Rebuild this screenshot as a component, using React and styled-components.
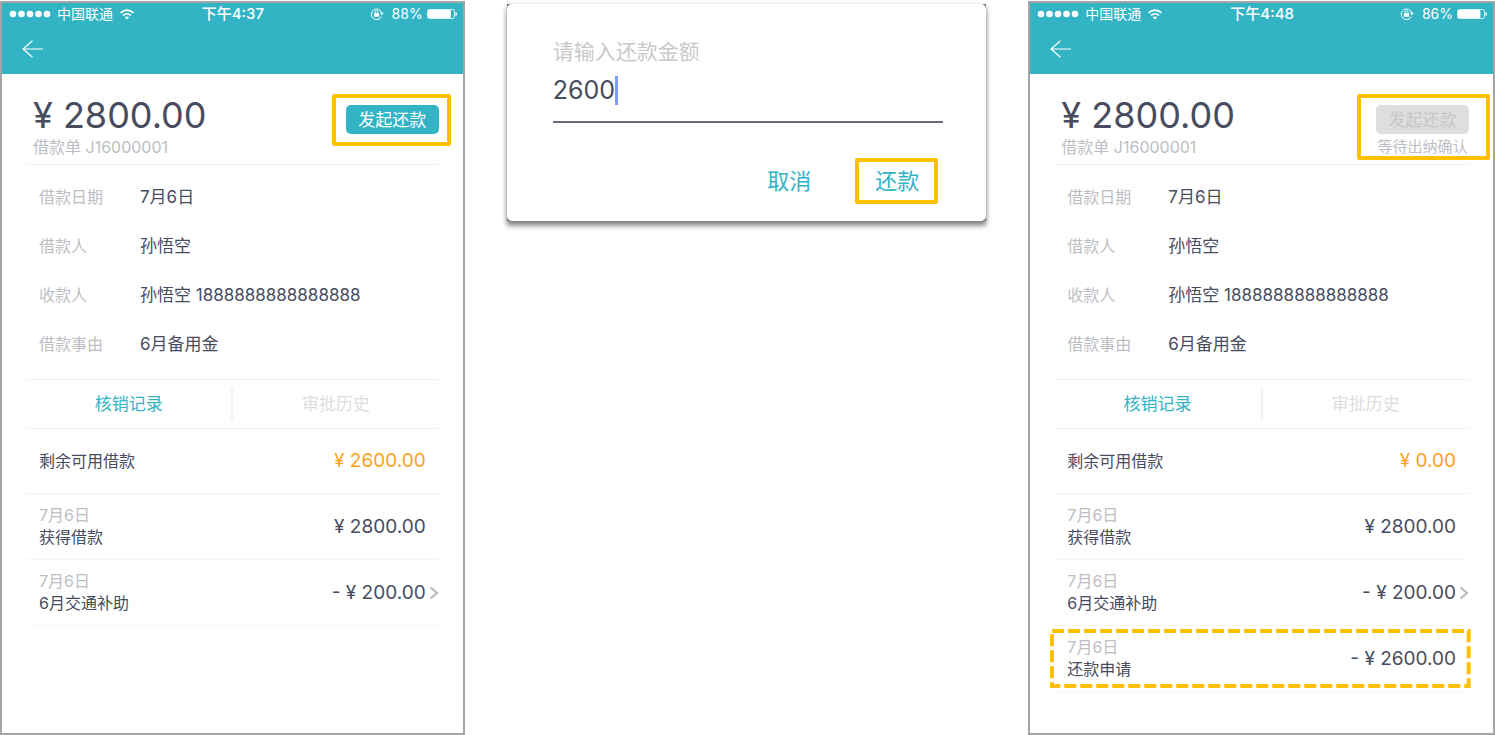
import React, { useState } from "react";
import styled, { createGlobalStyle, css } from "styled-components";

const color = {
  teal: "#32b4c5",
  ink: "#474c5e",
  muted: "#bcbec4",
  faint: "#dcdddf",
  line: "#f1f1f2",
  orange: "#ff9f1c",
  mark: "#ffc000",
  frame: "#a5a5a5",
};

const GlobalStyle = createGlobalStyle`
  *, *::before, *::after { box-sizing: border-box; }
  body {
    margin: 0;
    background: #fff;
    color: ${color.ink};
    font-family: Inter, "Noto Sans CJK SC", sans-serif;
    font-size: 16px;
    line-height: 22px;
  }
  button, input { font: inherit; color: inherit; }
  button { border: 0; padding: 0; background: none; cursor: pointer; }
`;

const Page = styled.main`
  display: grid;
  grid-template-columns: 465fr 480fr 467fr;
  column-gap: 42px;
  align-items: start;
  min-height: 100vh;
  padding-top: 1px;
`;

const Phone = styled.section`
  display: flex;
  flex-direction: column;
  min-height: calc(100vh - 1px);
  border: 2px solid ${color.frame};
`;

const TopBar = styled.header`
  background: ${color.teal};
  color: #fff;
  height: 71px;
`;

const StatusBar = styled.div`
  display: grid;
  grid-template-columns: 1fr auto 1fr;
  align-items: center;
  height: 22px;
  padding: 0 6px 0 7px;
  font-size: 14px;
`;

const StatusGroup = styled.div`
  display: flex;
  align-items: center;
  gap: ${(p) => p.$gap}px;
  justify-content: ${(p) => (p.$end ? "flex-end" : "flex-start")};
`;

const Time = styled.span`
  font-size: 15px;
  font-weight: 500;
`;

const BackButton = styled.button`
  display: flex;
  align-items: center;
  height: 48px;
  padding: 0 20px;
  color: #fff;
`;

const Body = styled.div`
  padding: 0 24px;
`;

const Summary = styled.div`
  display: flex;
  justify-content: space-between;
  align-items: flex-start;
  height: 91px;
  padding: 20px 0 0 7px;
  border-bottom: 1px solid ${color.line};
`;

const Total = styled.h1`
  margin: 0;
  font-size: 36px;
  line-height: 42px;
  font-weight: 400;
`;

const OrderNo = styled.p`
  margin: 0;
  color: ${color.muted};
`;

const Action = styled.div`
  position: relative;
  margin-top: 11px;
  text-align: center;
`;

const RepayButton = styled.button`
  display: block;
  width: 93px;
  height: 29px;
  border-radius: 5px;
  background: ${color.teal};
  color: #fff;
  font-size: 17px;
  line-height: 28px;
  &:disabled {
    background: #dedede;
    color: #c6c6c6;
    cursor: default;
  }
`;

const Note = styled.p`
  margin: 2px 0 0;
  color: ${color.muted};
  font-size: 15px;
`;

const Highlight = styled.span`
  position: absolute;
  inset: ${(p) => p.$inset};
  border: 4px solid ${color.mark};
  border-radius: 2px;
  pointer-events: none;
`;

const DashedMark = styled.svg`
  position: absolute;
  top: 3px;
  left: -4px;
  width: calc(100% + 6px);
  height: calc(100% - 6px);
  pointer-events: none;
  rect {
    width: calc(100% - 4px);
    height: calc(100% - 4px);
    fill: none;
    stroke: ${color.mark};
    stroke-width: 4px;
    stroke-dasharray: 12 4;
  }
`;

const Details = styled.dl`
  margin: 0;
  padding: 7px 0 11px 13px;
`;

const Detail = styled.div`
  display: flex;
  align-items: center;
  height: 49px;
  dt {
    width: 101px;
    color: ${color.muted};
  }
  dd {
    margin: 0;
    font-size: 17px;
  }
`;

const Tabs = styled.div`
  display: flex;
  align-items: center;
  height: 50px;
  border: solid ${color.line};
  border-width: 1px 0;
`;

const Tab = styled.button`
  flex: 1;
  height: 32px;
  font-size: 17px;
  color: ${(p) => (p.$active ? color.teal : color.faint)};
  & + & {
    border-left: 2px solid ${color.line};
  }
`;

const Records = styled.ul`
  margin: 0;
  padding: 0;
  list-style: none;
`;

const rowLayout = css`
  display: flex;
  justify-content: space-between;
  align-items: center;
  padding: 0 13px;
`;

const Remaining = styled.div`
  ${rowLayout}
  height: 65px;
  border-bottom: 1px solid ${color.line};
`;

const Record = styled.li`
  ${rowLayout}
  position: relative;
  height: 66px;
  border-bottom: 1px solid #f7f7f7;
`;

const RecordText = styled.div`
  padding-bottom: 2px;
  p { margin: 0; }
`;

const RecordDate = styled.p`
  color: ${color.muted};
`;

const Amount = styled.span`
  font-size: 19px;
  color: ${(p) => (p.$accent ? color.orange : color.ink)};
`;

const More = styled.a`
  position: absolute;
  right: 0;
  display: flex;
  color: #b9bbc2;
`;

const DialogArea = styled.div`
  padding-top: 3px;
`;

const DialogShadow = styled.div`
  background: #777;
  box-shadow: 0 5px 5px rgba(0, 0, 0, 0.42), 0 1px 5px rgba(0, 0, 0, 0.2);
`;

const Dialog = styled.form`
  padding: 34px 43px 13px 46px;
  border-radius: 5px;
  background: #fff;
`;

const FieldLabel = styled.label`
  display: block;
  color: #c9c9c9;
  font-size: 21px;
  line-height: 28px;
`;

const Field = styled.div`
  display: flex;
  align-items: center;
  height: 57px;
  padding-bottom: 7px;
  border-bottom: 2px solid #666a79;
`;

const AmountInput = styled.input`
  field-sizing: content;
  min-width: 24px;
  height: 32px;
  padding: 0;
  border: 0;
  outline: 0;
  background: none;
  font-size: 25px;
  caret-color: transparent;
`;

const Caret = styled.span`
  width: 3px;
  height: 29px;
  background: #7f9dff;
`;

const Buttons = styled.div`
  display: flex;
  justify-content: flex-end;
  gap: 64px;
  padding: 40px 24px 0 0;
  height: 85px;
`;

const TextButton = styled.button`
  position: relative;
  height: 36px;
  color: ${color.teal};
  font-size: 22px;
`;

const SignalDots = () => (
  <svg width="42" height="8" viewBox="0 0 42 8" fill="currentColor" aria-hidden="true">
    {[4, 12.500, 21, 29.500, 38].map((x) => (
      <circle key={x} cx={x} cy="4" r="3.3" />
    ))}
  </svg>
);

const WifiIcon = () => (
  <svg width="16" height="11" viewBox="0 0 16 12" fill="none" stroke="currentColor" strokeWidth="1.8" aria-hidden="true">
    <path d="M.9 4.3C5 .3 11 .3 15.100 4.300" />
    <path d="M3.600 7.100c2.600-2.500 6.200-2.500 8.800 0" />
    <path d="M8 11.500 5.600 9.100c1.500-1.300 3.300-1.300 4.800 0z" fill="currentColor" stroke="none" />
  </svg>
);

const LockIcon = () => (
  <svg width="14" height="12" viewBox="0 0 14 12" fill="none" stroke="currentColor" aria-hidden="true">
    <path d="M11.400 8.500A5.300 5.300 0 1 1 11.700 5" />
    <path d="M9.900 4.800h4L11.900 7.200z" fill="currentColor" stroke="none" />
    <rect x="3.900" y="5.200" width="5.200" height="3.600" fill="currentColor" stroke="none" />
    <path d="M5 5.500V4.300a1.500 1.500 0 0 1 3 0v1.200" />
  </svg>
);

const Battery = ({ level }) => (
  <svg width="30" height="11" viewBox="0 0 30 11" fill="none" aria-hidden="true">
    <rect x=".5" y=".5" width="27" height="9" rx="2" stroke="#fff" strokeOpacity=".8" />
    <rect x="1" y="1" width={(26 * level) / 100} height="8" rx="1" fill="#fff" />
    <path d="M28.500 3c2 .5 2 3.500 0 4z" fill="#fff" />
  </svg>
);

const ArrowIcon = () => (
  <svg width="21" height="18" viewBox="0 0 21 18" fill="none" stroke="currentColor" strokeWidth="1.200" aria-hidden="true">
    <path d="M10.500 .8 1 9l9.500 8.200M1 9h20" />
  </svg>
);

const ChevronIcon = () => (
  <svg width="10" height="14" viewBox="0 0 10 14" fill="none" stroke="currentColor" strokeWidth="2.200" aria-hidden="true">
    <path d="M1.500 1.500 8 7l-6.500 5.500" />
  </svg>
);

const details = [
  ["借款日期", "7月6日"],
  ["借款人", "孙悟空"],
  ["收款人", "孙悟空 1888888888888888"],
  ["借款事由", "6月备用金"],
];

const loanRecords = [
  { date: "7月6日", title: "获得借款", amount: "¥ 2800.00" },
  { date: "7月6日", title: "6月交通补助", amount: "- ¥ 200.00", link: true },
];

const tabNames = ["核销记录", "审批历史"];

function LoanScreen({ time, battery, remaining, records, pending }) {
  const [tab, setTab] = useState(0);
  return (
    <Phone>
      <TopBar>
        <StatusBar>
          <StatusGroup $gap={6}>
            <SignalDots />
            <span>中国联通</span>
            <WifiIcon />
          </StatusGroup>
          <Time>{time}</Time>
          <StatusGroup $gap={4} $end>
            <LockIcon />
            <span>&nbsp;{battery}%</span>
            <Battery level={battery} />
          </StatusGroup>
        </StatusBar>
        <BackButton type="button" aria-label="返回">
          <ArrowIcon />
        </BackButton>
      </TopBar>
      <Body>
        <Summary>
          <div>
            <Total>¥ 2800.00</Total>
            <OrderNo>借款单 J16000001</OrderNo>
          </div>
          <Action>
            <RepayButton type="button" disabled={pending}>发起还款</RepayButton>
            {pending && <Note>等待出纳确认</Note>}
            <Highlight $inset={pending ? "-11px -21px -2px -19px" : "-11px -12px -12px -14px"} />
          </Action>
        </Summary>
        <Details>
          {details.map(([name, value]) => (
            <Detail key={name}>
              <dt>{name}</dt>
              <dd>{value}</dd>
            </Detail>
          ))}
        </Details>
        <Tabs role="tablist">
          {tabNames.map((name, i) => (
            <Tab key={name} type="button" role="tab" aria-selected={tab === i} $active={tab === i} onClick={() => setTab(i)}>
              {name}
            </Tab>
          ))}
        </Tabs>
        <Remaining>
          <span>剩余可用借款</span>
          <Amount $accent>{remaining}</Amount>
        </Remaining>
        <Records>
          {records.map((r) => (
            <Record key={r.title}>
              <RecordText>
                <RecordDate>{r.date}</RecordDate>
                <p>{r.title}</p>
              </RecordText>
              <Amount>{r.amount}</Amount>
              {r.link && (
                <More href="#detail" aria-label={r.title}>
                  <ChevronIcon />
                </More>
              )}
              {r.marked && (
                <DashedMark aria-hidden="true">
                  <rect x="2" y="2" />
                </DashedMark>
              )}
            </Record>
          ))}
        </Records>
      </Body>
    </Phone>
  );
}

function RepayDialog() {
  const [value, setValue] = useState("2600");
  return (
    <DialogArea>
      <DialogShadow>
        <Dialog onSubmit={(e) => e.preventDefault()}>
          <FieldLabel htmlFor="repay-amount">请输入还款金额</FieldLabel>
          <Field>
            <AmountInput id="repay-amount" inputMode="decimal" value={value} onChange={(e) => setValue(e.target.value)} />
            <Caret />
          </Field>
          <Buttons>
            <TextButton type="button">取消</TextButton>
            <TextButton type="submit">
              还款
              <Highlight $inset="-5px -19px -5px -20px" />
            </TextButton>
          </Buttons>
        </Dialog>
      </DialogShadow>
    </DialogArea>
  );
}

export default function App() {
  return (
    <>
      <GlobalStyle />
      <Page>
        <LoanScreen time="下午4:37" battery={88} remaining="¥ 2600.00" records={loanRecords} />
        <RepayDialog />
        <LoanScreen
          time="下午4:48"
          battery={86}
          remaining="¥ 0.00"
          pending
          records={[...loanRecords, { date: "7月6日", title: "还款申请", amount: "- ¥ 2600.00", marked: true }]}
        />
      </Page>
    </>
  );
}
